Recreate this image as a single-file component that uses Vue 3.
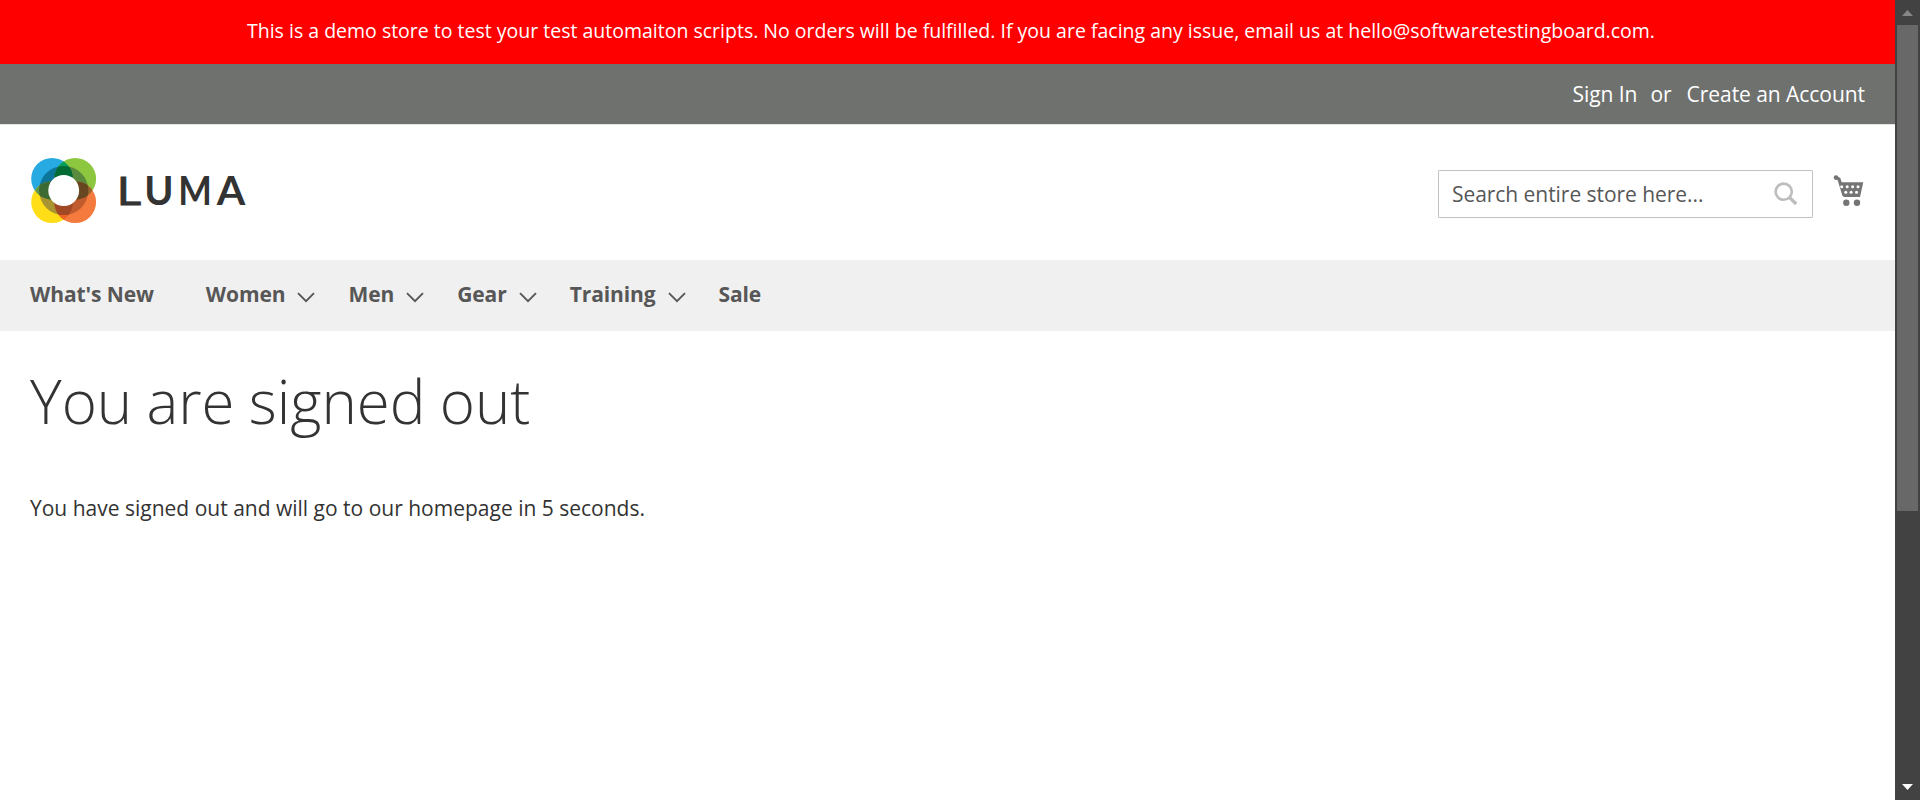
<script setup>
const nav = [
  { label: "What's New" },
  { label: 'Women', menu: true },
  { label: 'Men', menu: true },
  { label: 'Gear', menu: true },
  { label: 'Training', menu: true },
  { label: 'Sale' }
]
const dots = [
  [8.7, 11.8], [14.2, 11.8], [19.6, 11.8], [25, 11.8],
  [12.8, 17.3], [18.1, 17.3], [23.5, 17.3]
]
</script>

<template>
  <div class="window">
    <div class="page">
      <div class="notice">This is a demo store to test your test automaiton scripts. No orders will be fulfilled. If you are facing any issue, email us at hello@softwaretestingboard.com.</div>
      <div class="panel">
        <a class="signin">Sign In</a><span class="or">or</span><a>Create an Account</a>
      </div>
      <header class="header">
        <svg class="logo" width="222" height="70" viewBox="0 0 222 70">
          <defs>
            <clipPath id="blue"><circle cx="22.1" cy="23.8" r="20.9" /></clipPath>
            <clipPath id="orange"><circle cx="45.2" cy="47.1" r="20.9" /></clipPath>
            <clipPath id="core"><circle cx="33.7" cy="35.5" r="24.6" /></clipPath>
          </defs>
          <circle cx="22.1" cy="23.8" r="20.9" fill="#27a9e1" />
          <circle cx="45.2" cy="23.8" r="20.9" fill="#8dc63f" />
          <circle cx="22.1" cy="47.1" r="20.9" fill="#ffde17" />
          <circle cx="45.2" cy="47.1" r="20.9" fill="#f47b3d" />
          <g clip-path="url(#blue)">
            <circle cx="45.2" cy="23.8" r="20.9" fill="#00a05a" />
            <circle cx="22.1" cy="47.1" r="20.9" fill="#5f9a4c" />
          </g>
          <g clip-path="url(#orange)">
            <circle cx="45.2" cy="23.8" r="20.9" fill="#96652d" />
            <circle cx="22.1" cy="47.1" r="20.9" fill="#ee6224" />
          </g>
          <g clip-path="url(#core)">
            <circle cx="22.1" cy="23.8" r="20.9" fill="#0b7699" />
            <circle cx="45.2" cy="23.8" r="20.9" fill="#5a8a3d" />
            <circle cx="22.1" cy="47.1" r="20.9" fill="#a89531" />
            <circle cx="45.2" cy="47.1" r="20.9" fill="#c15c2e" />
            <g clip-path="url(#blue)">
              <circle cx="45.2" cy="23.8" r="20.9" fill="#006b35" />
              <circle cx="22.1" cy="47.1" r="20.9" fill="#3b6a33" />
            </g>
            <g clip-path="url(#orange)">
              <circle cx="45.2" cy="23.8" r="20.9" fill="#66471f" />
              <circle cx="22.1" cy="47.1" r="20.9" fill="#a14824" />
            </g>
          </g>
          <circle cx="33.7" cy="35.5" r="15.4" fill="#fff" />
          <g class="word">
            <text class="thin" transform="translate(86.7 49.7) scale(1.2 1)">L</text>
            <text transform="translate(114.2 49.7)">U</text>
            <text transform="translate(148.3 49.7) scale(.9 1)">M</text>
            <text transform="translate(186.8 49.7) scale(1.04 1)">A</text>
          </g>
        </svg>
        <div class="tools">
          <div class="search">
            <span>Search entire store here...</span>
            <svg width="24" height="24" viewBox="0 0 24 24" fill="none" stroke="#bdbdbd">
              <circle cx="9.7" cy="9.7" r="8.1" stroke-width="2.6" />
              <path d="M15.5 15.5 22.2 22" stroke-width="3.3" />
            </svg>
          </div>
          <svg class="cart" width="32" height="32" viewBox="0 0 32 32">
            <path d="M2.5 2.2 6 4 11 20.5" fill="none" stroke="#757575" stroke-width="3.2" />
            <circle cx="3" cy="2.6" r="2.3" fill="#757575" />
            <path d="M6 7.2H30.3L27 22H10.5Z" fill="#757575" />
            <circle v-for="(d, i) in dots" :key="i" :cx="d[0]" :cy="d[1]" r="1.5" fill="#fff" />
            <circle cx="13.3" cy="27.7" r="3.2" fill="#757575" />
            <circle cx="24" cy="27.7" r="3.2" fill="#757575" />
          </svg>
        </div>
      </header>
      <nav class="nav">
        <a v-for="n in nav" :key="n.label">{{ n.label }}<svg v-if="n.menu" width="18" height="11" viewBox="0 0 18 11"><path d="M1 1.2 9 9.2 17 1.2" fill="none" stroke="#575757" stroke-width="1.9" /></svg></a>
      </nav>
      <main>
        <h1>You are signed out</h1>
        <p>You have signed out and will go to our homepage in 5 seconds.</p>
      </main>
    </div>
    <aside class="scroll">
      <svg width="11" height="6" viewBox="0 0 11 6"><path d="M0 6 5.5 0 11 6Z" fill="#868686" /></svg>
      <div class="thumb"></div>
      <svg class="down" width="11" height="6" viewBox="0 0 11 6"><path d="M0 0H11L5.5 6Z" fill="#fff" /></svg>
    </aside>
  </div>
</template>

<style>
body { overflow: hidden; background: #fff; }
</style>

<style scoped>
.window { display: flex; height: 800px; font-family: 'Open Sans', 'Noto Sans', sans-serif; font-size: 21px; color: #333; }
.page { flex: 1; min-width: 0; }
.notice { height: 64px; line-height: 62px; background: #f00; color: #fff; text-align: center; font-size: 19.5px; white-space: nowrap; padding-left: 7px; box-sizing: border-box; }
.panel { height: 60px; line-height: 60px; box-sizing: border-box; background: #6e716e; color: #fff; display: flex; justify-content: flex-end; padding-right: 30px; letter-spacing: -0.05px; }
.or { margin: 0 15px 0 13px; }
.header { height: 136px; box-sizing: border-box; border-top: 1px solid #e4e4e4; display: flex; justify-content: space-between; }
.logo { margin: 30px 0 0 30px; }
.word { font-family: Lato, sans-serif; font-weight: 700; font-size: 39.5px; fill: #333; }
.thin { font-weight: 400; stroke: #333; stroke-width: 0.9px; }
.tools { display: flex; margin: 45px 30px 0 0; }
.search { width: 375px; height: 48px; box-sizing: border-box; border: 1px solid #c2c2c2; border-radius: 1px; display: flex; justify-content: space-between; align-items: center; padding: 0 14px 0 13px; color: #575757; letter-spacing: -0.05px; }
.cart { margin: 5px 0 0 20px; }
.nav { height: 71px; box-sizing: border-box; background: #f0f0f0; display: flex; padding-left: 30px; font-weight: 700; line-height: 68px; color: #575757; letter-spacing: -0.1px; }
.nav a { margin-right: 33px; }
.nav a:first-child { margin-right: 52px; }
.nav svg { margin-left: 12px; vertical-align: -1px; }
h1 { margin: 29px 0 0 30px; font-size: 60px; font-weight: 300; line-height: 82px; word-spacing: -1.4px; }
p { margin: 51px 0 0 30px; line-height: 30px; }
.scroll { width: 25px; box-sizing: border-box; background: #424242; display: flex; flex-direction: column; align-items: center; padding-top: 10px; }
.thumb { width: 21px; height: 486px; margin-top: 9px; background: #686868; }
.down { margin-top: auto; margin-bottom: 10px; }
</style>
